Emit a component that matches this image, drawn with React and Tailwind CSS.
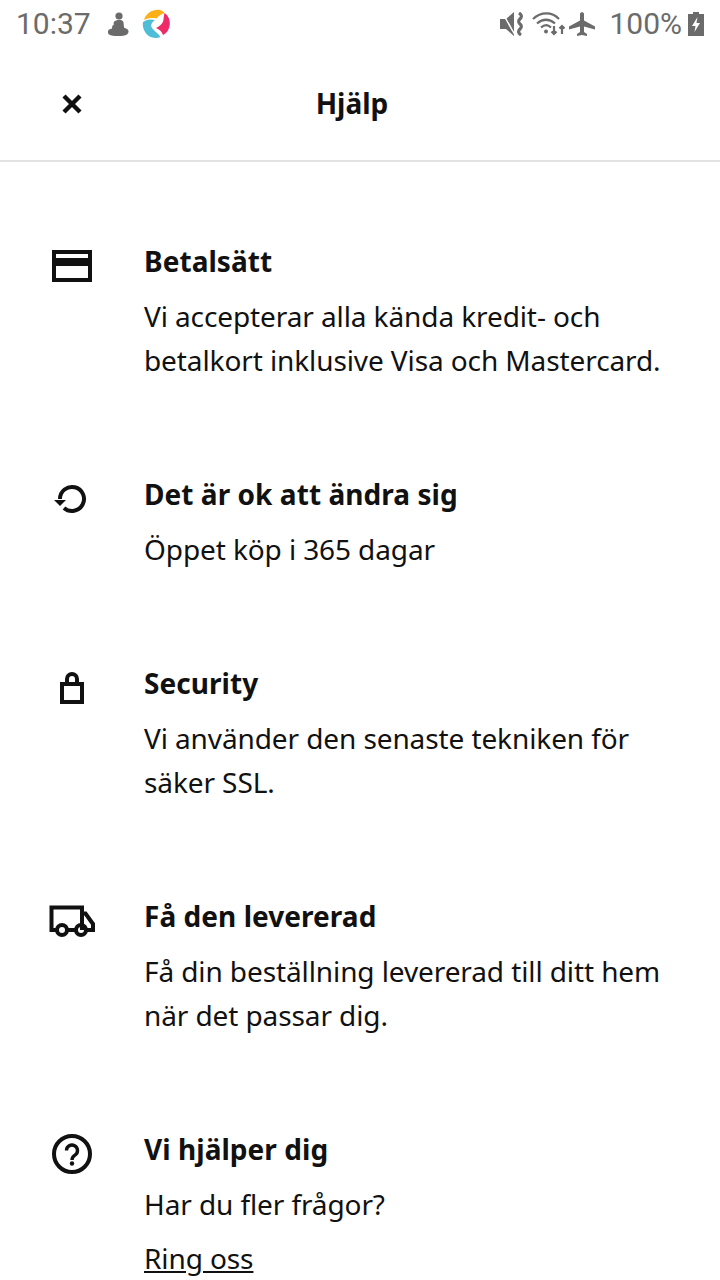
const CardIcon = () => (
  <svg width="48" height="48" viewBox="0 0 48 48">
    <path fill="#111" fillRule="evenodd" d="M4 10h40v32H4zM8 14v4h32v-4zM8 26v12h32V26z" />
  </svg>
);

const RefreshIcon = () => (
  <svg width="48" height="48" viewBox="0 0 48 48" fill="none">
    <path stroke="#111" strokeWidth="4" d="M12 26a12 12 0 1 1 4 8.900" />
    <path fill="#111" d="M6 27h12l-6 6z" />
  </svg>
);

const LockIcon = () => (
  <svg width="48" height="48" viewBox="0 0 48 48" fill="none">
    <rect x="14" y="22" width="20" height="18" stroke="#111" strokeWidth="4" />
    <path stroke="#111" strokeWidth="4" d="M19 21v-4a5 5 0 0 1 10 0v4" />
  </svg>
);

const TruckIcon = () => (
  <svg width="48" height="48" viewBox="0 0 48 48" fill="none">
    <path stroke="#111" strokeWidth="4" d="M9 35H3.500V12.500H34V35M19 35h9M34 18.500h3.500L45 29v6h-6" />
    <circle cx="14" cy="35" r="5" stroke="#111" strokeWidth="4" />
    <circle cx="33" cy="35" r="5" stroke="#111" strokeWidth="4" />
  </svg>
);

const QuestionIcon = () => (
  <svg width="48" height="48" viewBox="0 0 48 48" fill="none">
    <circle cx="24" cy="26" r="18" stroke="#111" strokeWidth="4" />
    <path stroke="#111" strokeWidth="3.400" d="M18.500 22.500a5.500 5.500 0 1 1 8.500 4.600c-2 1.300-3 2.400-3 4.900" />
    <circle cx="24" cy="35.500" r="2.200" fill="#111" />
  </svg>
);

const CloseIcon = () => (
  <svg width="24" height="24" viewBox="0 0 24 24" fill="none">
    <path stroke="#111" strokeWidth="4.400" d="M4 4l16 16M20 4L4 20" />
  </svg>
);

const sections = [
  { icon: <CardIcon />, title: "Betalsätt", lines: ["Vi accepterar alla kända kredit- och", "betalkort inklusive Visa och Mastercard."] },
  { icon: <RefreshIcon />, title: "Det är ok att ändra sig", lines: ["Öppet köp i 365 dagar"] },
  { icon: <LockIcon />, title: "Security", lines: ["Vi använder den senaste tekniken för", "säker SSL."] },
  { icon: <TruckIcon />, title: "Få den levererad", lines: ["Få din beställning levererad till ditt hem", "när det passar dig."] },
  { icon: <QuestionIcon />, title: "Vi hjälper dig", lines: ["Har du fler frågor?"], link: "Ring oss" },
];

const StatusBar = () => (
  <div className="h-12 flex items-center justify-between px-[16px] text-[#6b6b6b] text-[30px] font-['Roboto',sans-serif]">
    <div className="flex items-center">
      <span className="leading-none">10:37</span>
      <svg className="ml-[17px]" width="21" height="24" viewBox="0 0 21 24" fill="#6b6b6b">
        <circle cx="11" cy="4" r="3.600" />
        <path d="M8 8.500c3-1.500 7-1 7.500 2l.5 5 3 1.500c2 1 2 4 0 5.500-2 1.500-5 1.500-9 1.500s-7 0-9-1.500c-1.500-1-1.500-3.500 0-5l3-1c0-3 1-3.500 2-4-1-1.500 0-3.500 2-4z" />
      </svg>
      <svg className="ml-[12px]" width="30" height="30" viewBox="0 0 30 30" fill="none">
        <path fill="#fbb016" d="M3 11C5 4 12 0 19 1c2 .5 3.500 1.500 4.500 3-3.500 1-6 3-8 5.500-4-1-8-.5-12.500 1.500z" />
        <path fill="#ee2a68" d="M23.500 4c5 3 6.500 10 4.500 15-1 3-3 5.500-6 7-1-3.500-3.500-5.500-7-7 4-2 7-4.500 7.500-8.500.2-2.500.5-4.500 1-6.500z" />
        <path fill="#4fbdd6" d="M2 13c4-3 8.500-3 12-2-3 2-5 5-3 8 2 3 6 5 8.500 9-6 2.500-13 0-16-6-1.500-3-2-6-1.500-9z" />
      </svg>
    </div>
    <div className="flex items-center">
      <svg width="24" height="24" viewBox="0 0 24 24" fill="#6b6b6b">
        <path d="M0 7h6l8-7v24l-8-7H0z" />
        <path stroke="#fff" strokeWidth="1.500" d="M2 0l13 23" />
        <path fill="none" stroke="#6b6b6b" strokeWidth="3.200" d="M19 1c3 2 3 4 1 6s-2 3 0 5 2 3 0 5-2 4 1 6" />
      </svg>
      <svg className="ml-[8px]" width="33" height="24" viewBox="0 0 33 24" fill="none" stroke="#6b6b6b" strokeWidth="2.200">
        <path d="M1 7c8-7.500 19-7.500 26 0M5 11.500c6-5 12-5 18 0M9 15.500c3.500-3 7-3 10 0" />
        <circle cx="14" cy="19.500" r="2" fill="#6b6b6b" stroke="none" />
        <path d="M22 14v8M19.500 19.500l2.500 2.500 2.500-2.500M30 22v-8M27.500 16.500l2.500-2.500 2.500 2.500" />
      </svg>
      <svg className="ml-[4px]" width="26" height="24" viewBox="0 0 26 24" fill="#6b6b6b">
        <path d="M11 2c0-2.500 4-2.500 4 0v6.500l11 6v3l-11-3v5.500l3 2v2l-5-1-5 1v-2l3-2V14.500L0 17.500v-3l11-6z" />
      </svg>
      <span className="ml-[14px] leading-none">100%</span>
      <svg className="ml-[6px]" width="16" height="24" viewBox="0 0 16 24" fill="#6b6b6b">
        <path fillRule="evenodd" d="M5 0h6v2h5v22H0V2h5zM9.500 5L4 14h3.500l-1 6 5.500-9H8.500z" />
      </svg>
    </div>
  </div>
);

export default function App() {
  return (
    <div className="w-[720px] h-[1280px] overflow-hidden bg-white text-[#111] font-['Noto_Sans',sans-serif]">
      <StatusBar />
      <header className="relative h-[114px] flex items-center justify-center pr-[16px] pb-[2px] border-b-2 border-[#e2e2e2]">
        <div className="absolute left-[60px] top-[44px]">
          <CloseIcon />
        </div>
        <h1 className="text-[28px] font-bold leading-none">Hjälp</h1>
      </header>
      <main className="flex flex-col gap-[90px] pt-[78px] px-[48px]">
        {sections.map((s) => (
          <div key={s.title} className="flex gap-[48px]">
            <div className="w-[48px] h-[48px] shrink-0">{s.icon}</div>
            <div className="-mt-px -mb-px pb-[2px]">
              <h2 className="text-[28px] font-bold leading-[44px] tracking-[0.05px]">{s.title}</h2>
              <div className="mt-[11px] text-[28px] leading-[44px] tracking-[-0.1px] whitespace-nowrap">
                {s.lines.map((l) => (
                  <p key={l}>{l}</p>
                ))}
              </div>
              {s.link && <a className="block mt-[10px] text-[28px] leading-[44px] tracking-[-0.1px] underline">{s.link}</a>}
            </div>
          </div>
        ))}
      </main>
    </div>
  );
}
